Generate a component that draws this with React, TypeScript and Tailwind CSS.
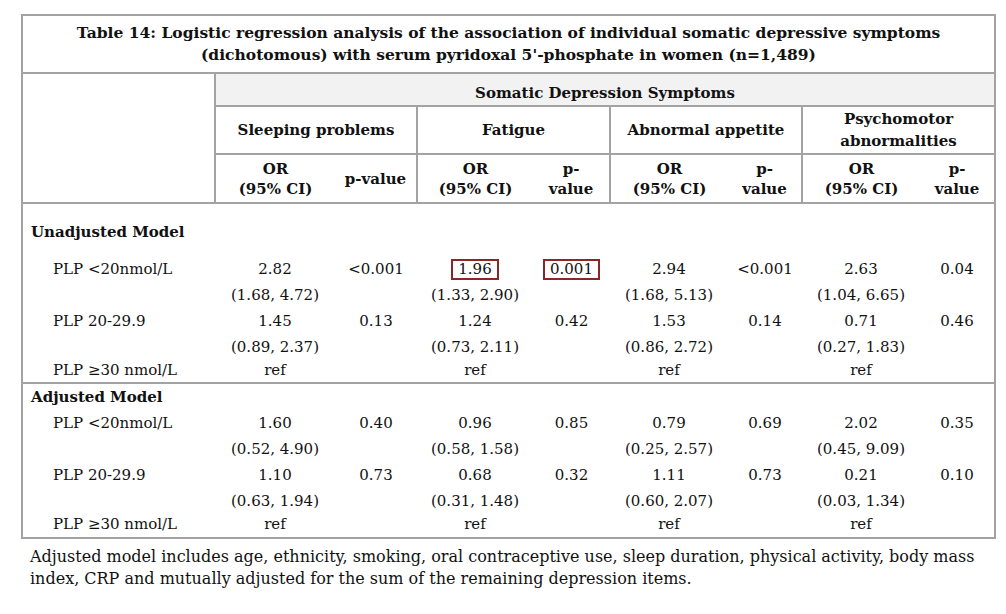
import React from "react";

type Row = {
  label: string;
  cells: { or: string; ci?: string; p?: string; boxOr?: boolean; boxP?: boolean }[];
};

const unadjusted: Row[] = [
  {
    label: "PLP <20nmol/L",
    cells: [
      { or: "2.82", ci: "(1.68, 4.72)", p: "<0.001" },
      { or: "1.96", ci: "(1.33, 2.90)", p: "0.001", boxOr: true, boxP: true },
      { or: "2.94", ci: "(1.68, 5.13)", p: "<0.001" },
      { or: "2.63", ci: "(1.04, 6.65)", p: "0.04" },
    ],
  },
  {
    label: "PLP 20-29.9",
    cells: [
      { or: "1.45", ci: "(0.89, 2.37)", p: "0.13" },
      { or: "1.24", ci: "(0.73, 2.11)", p: "0.42" },
      { or: "1.53", ci: "(0.86, 2.72)", p: "0.14" },
      { or: "0.71", ci: "(0.27, 1.83)", p: "0.46" },
    ],
  },
];

const adjusted: Row[] = [
  {
    label: "PLP <20nmol/L",
    cells: [
      { or: "1.60", ci: "(0.52, 4.90)", p: "0.40" },
      { or: "0.96", ci: "(0.58, 1.58)", p: "0.85" },
      { or: "0.79", ci: "(0.25, 2.57)", p: "0.69" },
      { or: "2.02", ci: "(0.45, 9.09)", p: "0.35" },
    ],
  },
  {
    label: "PLP 20-29.9",
    cells: [
      { or: "1.10", ci: "(0.63, 1.94)", p: "0.73" },
      { or: "0.68", ci: "(0.31, 1.48)", p: "0.32" },
      { or: "1.11", ci: "(0.60, 2.07)", p: "0.73" },
      { or: "0.21", ci: "(0.03, 1.34)", p: "0.10" },
    ],
  },
];

const groups = ["Sleeping problems", "Fatigue", "Abnormal appetite"];

function Boxed({ children, on }: { children: React.ReactNode; on?: boolean }) {
  if (!on) return <>{children}</>;
  return (
    <span className="inline-block border-2 border-[#8b2626] px-[5px] leading-[17px]">
      {children}
    </span>
  );
}

function DataRows({ rows }: { rows: Row[] }) {
  return (
    <>
      {rows.map((r) => (
        <React.Fragment key={r.label}>
          <tr className="h-[26px]">
            <td className="pl-[30px] text-left align-middle">{r.label}</td>
            {r.cells.map((c, i) => (
              <React.Fragment key={i}>
                <td className="text-center align-middle">
                  <Boxed on={c.boxOr}>{c.or}</Boxed>
                </td>
                <td className="text-center align-middle">
                  <Boxed on={c.boxP}>{c.p}</Boxed>
                </td>
              </React.Fragment>
            ))}
          </tr>
          <tr className="h-[26px]">
            <td />
            {r.cells.map((c, i) => (
              <React.Fragment key={i}>
                <td className="text-center align-middle">{c.ci}</td>
                <td />
              </React.Fragment>
            ))}
          </tr>
        </React.Fragment>
      ))}
    </>
  );
}

function RefRow({ last }: { last?: boolean }) {
  return (
    <tr className={last ? "h-[24px]" : "h-[23px]"}>
      <td className="pl-[30px] text-left align-top leading-[20px]">PLP ≥30 nmol/L</td>
      {[0, 1, 2, 3].map((i) => (
        <React.Fragment key={i}>
          <td className="text-center align-top leading-[20px]">ref</td>
          <td />
        </React.Fragment>
      ))}
    </tr>
  );
}

export default function App() {
  const line = "border-2 border-[#a3a3a3]";
  return (
    <div
      className="min-h-[614px] w-[1006px] bg-white text-[#111] pl-[21px] pt-[14px]"
      style={{ fontFamily: '"DejaVu Serif", "Liberation Serif", serif' }}
    >
      <table className="w-[973px] table-fixed border-collapse text-[15px] leading-[22px]">
        <colgroup>
          <col className="w-[193px]" />
          <col className="w-[120px]" />
          <col className="w-[82px]" />
          <col className="w-[116px]" />
          <col className="w-[77px]" />
          <col className="w-[118px]" />
          <col className="w-[74px]" />
          <col className="w-[118px]" />
          <col className="w-[75px]" />
        </colgroup>
        <thead>
          <tr className="h-[58px]">
            <th colSpan={9} className={`${line} text-center font-bold text-[15.5px] leading-[22px]`}>
              Table 14: Logistic regression analysis of the association of individual somatic depressive symptoms
              <br />
              (dichotomous) with serum pyridoxal 5'-phosphate in women (n=1,489)
            </th>
          </tr>
          <tr className="h-[33px]">
            <th rowSpan={3} className={line} />
            <th colSpan={8} className={`${line} bg-[#f2f2f2] text-center align-bottom pb-[1px] font-bold`}>
              Somatic Depression Symptoms
            </th>
          </tr>
          <tr className="h-[48px]">
            {groups.map((g) => (
              <th key={g} colSpan={2} className={`${line} text-center align-middle font-bold`}>
                {g}
              </th>
            ))}
            <th colSpan={2} className={`${line} text-center align-middle font-bold leading-[22px]`}>
              Psychomotor
              <br />
              abnormalities
            </th>
          </tr>
          <tr className="h-[49px]">
            {[0, 1, 2, 3].map((i) => (
              <React.Fragment key={i}>
                <th className="border-y-2 border-l-2 border-[#a3a3a3] text-center align-middle font-bold leading-[20px]">
                  OR
                  <br />
                  (95% CI)
                </th>
                <th className="border-y-2 border-r-2 border-[#a3a3a3] text-center align-middle font-bold leading-[20px]">
                  {i === 0 ? (
                    "p-value"
                  ) : (
                    <>
                      p-
                      <br />
                      value
                    </>
                  )}
                </th>
              </React.Fragment>
            ))}
          </tr>
        </thead>
        <tbody className="border-x-2 border-b-2 border-[#a3a3a3]">
          <tr className="h-[53px]">
            <td colSpan={9} className="pl-[8px] pt-[4px] text-left align-middle font-bold">
              Unadjusted Model
            </td>
          </tr>
          <DataRows rows={unadjusted} />
          <RefRow />
          <tr className="h-[27px] border-t-2 border-[#a3a3a3]">
            <td colSpan={9} className="pl-[8px] text-left align-middle font-bold leading-[20px]">
              Adjusted Model
            </td>
          </tr>
          <DataRows rows={adjusted} />
          <RefRow last />
        </tbody>
      </table>
      <p className="mt-[7px] pl-[9px] text-[16px] leading-[22px] text-[#111] w-[970px]">
        Adjusted model includes age, ethnicity, smoking, oral contraceptive use, sleep duration, physical activity, body mass
        index, CRP and mutually adjusted for the sum of the remaining depression items.
      </p>
    </div>
  );
}
